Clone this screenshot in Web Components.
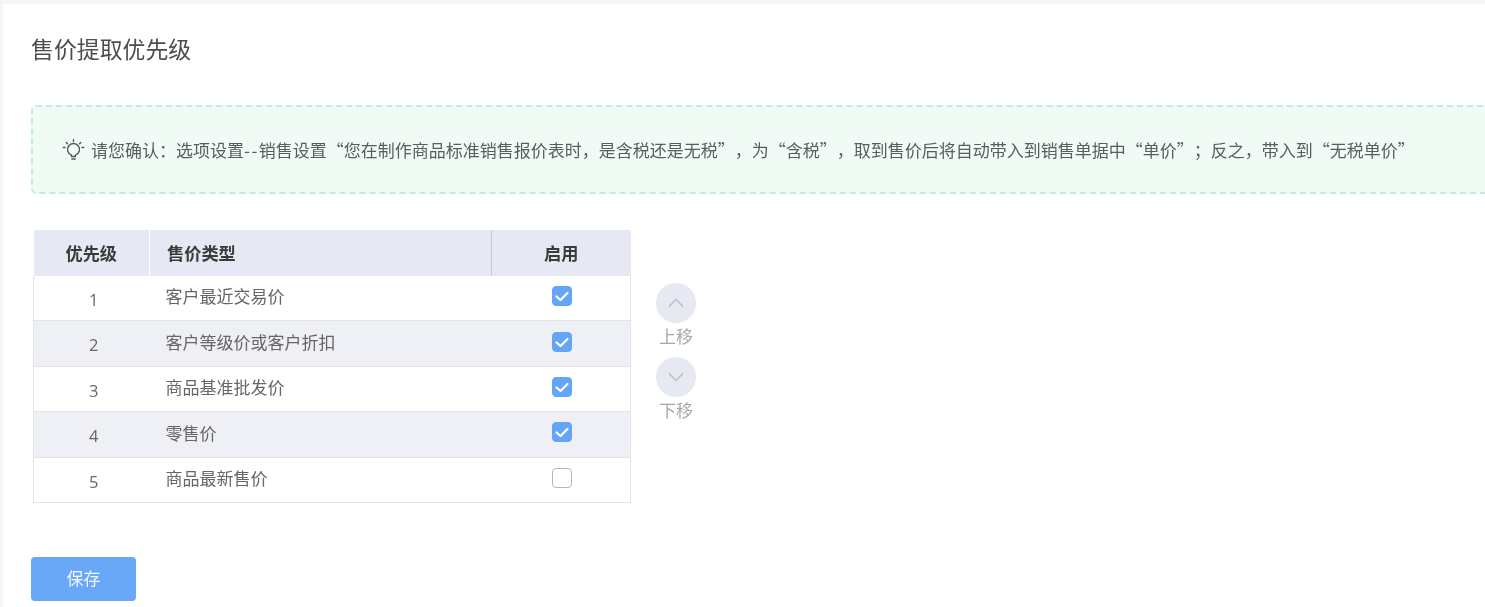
<!DOCTYPE html>
<html lang="zh-CN"><head><meta charset="utf-8">
<style>
html,body{margin:0;padding:0;height:607px;overflow:hidden;background:#f3f5f7;font-family:"Noto Sans CJK SC","Liberation Sans",sans-serif}
tip-notice b{font-weight:400;font-variant-east-asian:normal;letter-spacing:1.500px}
</style></head><body>
<price-page>
  <span slot="title">售价提取优先级</span>
  <tip-notice>请您确认：选项设置<b>--</b>销售设置“您在制作商品标准销售报价表时，是含税还是无税”，为“含税”，取到售价后将自动带入到销售单据中“单价”；反之，带入到“无税单价”</tip-notice>
  <priority-table slot="table"></priority-table>
  <move-controls slot="moves"></move-controls>
  <save-button slot="save">保存</save-button>
</price-page>
<script>
const def=(n,html)=>{customElements.define(n,class extends HTMLElement{constructor(){super();this.attachShadow({mode:'open'}).innerHTML=html;}})};
def('price-page',`<style>
:host{display:block;padding:4px 0 0 3px;height:607px;box-sizing:border-box;overflow:hidden}
.panel{background:#fff;height:100%;width:1600px;padding:0 0 0 28px;box-sizing:border-box;filter:blur(.35px)}
h1{margin:0;padding-top:29px;font-size:22.900px;line-height:30px;font-weight:400;color:#4d4d4d;height:70px;box-sizing:border-box}
.row{display:flex;margin:36px 0 0 2px;height:273px}
.save{margin-top:54px}
</style><div class="panel"><h1><slot name="title"></slot></h1><slot></slot>
<div class="row"><slot name="table"></slot><slot name="moves"></slot></div>
<div class="save"><slot name="save"></slot></div></div>`);
def('tip-notice',`<style>
:host{display:flex;align-items:center;box-sizing:border-box;margin-top:31px;height:89px;width:1560px;border:2px dashed #bfeed9;border-radius:5px;background:#f1fbf6;padding:0 0 0 29px;color:#5c5c5c;font-size:17px;white-space:nowrap;text-spacing-trim:space-all;font-variant-east-asian:full-width}
svg{width:23px;height:22px;margin-right:6px;flex:none}
</style><svg viewBox="0 0 23 22" fill="none" stroke="#555" stroke-width="1.400" stroke-linecap="round" stroke-linejoin="round"><path d="M9.500 17.500v-1.300a6 6 0 1 1 4 0v1.300z"/><path d="M9.800 20h3.400M11.500 .8v1.700M4.300 3.600l1.100 1.100M18.700 3.600l-1.100 1.100M1.300 8.500h1.700M20 8.500h1.700"/></svg><span><slot></slot></span>`);
const rows=[['1','客户最近交易价',1],['2','客户等级价或客户折扣',1],['3','商品基准批发价',1],['4','零售价',1],['5','商品最新售价',0]];
def('priority-table',`<style>
:host{display:block;width:597px}
table{border-collapse:collapse;table-layout:fixed;width:597px;font-size:17px;color:#666}
th{background:#e6e9f3;color:#3a3a3a;font-weight:700;font-size:17.200px;height:45.500px;padding:0 0 1px;box-sizing:border-box}
th+th{border-left:1px solid #fff}
th:last-child{border-left:1px solid #c6c9d2}
th.l,td.l{text-align:left;padding-left:16px}
th.l{padding-left:17px}
td{height:45.400px;padding:0;border:1px solid #e3e4e8;border-width:0 0 1px;text-align:center;box-sizing:border-box}
td:first-child{border-left:1px solid #e3e4e8}
td:last-child{border-right:1px solid #e3e4e8}
tr:nth-child(even) td{background:#eef0f6}
.n{font-family:"Open Sans",sans-serif;font-size:16.500px;padding:2.500px 0 0 4px}
.l span{position:relative;top:-2px}
</style><table><colgroup><col style="width:116px"><col style="width:342px"><col style="width:139px"></colgroup>
<thead><tr><th>优先级</th><th class="l">售价类型</th><th>启用</th></tr></thead><tbody>${rows.map(r=>`<tr><td class="n">${r[0]}</td><td class="l"><span>${r[1]}</span></td><td><check-box ${r[2]?'checked':''}></check-box></td></tr>`).join('')}</tbody></table>`);
def('check-box',`<style>
:host{display:block;width:20px;height:20px;margin:-4px auto 0 auto;position:relative;left:1px;box-sizing:border-box;border-radius:4px;background:#fff;border:1px solid #b5b7bb}
:host([checked]){background:#64a5f6;border-color:#64a5f6}
svg{display:none;width:20px;height:20px;margin:-1px}
:host([checked]) svg{display:block}
</style><svg viewBox="0 0 20 20" fill="none" stroke="#fff" stroke-width="2.200" stroke-linecap="round" stroke-linejoin="round"><path d="M4.500 10.500l4 3.500 7-7"/></svg>`);
def('move-controls',`<style>
:host{display:flex;flex-direction:column;align-items:center;width:40px;margin:53px 0 0 26px;font-size:17px;color:#a6a6a6}
.c{width:40px;height:40px;border-radius:50%;background:#e6e8f2;display:flex;align-items:center;justify-content:center}
.t{line-height:27px;height:35px;white-space:nowrap;margin-top:-1px}
svg{width:20px;height:20px}
</style><div class="c"><svg viewBox="0 0 20 20" fill="none" stroke="#bcbec6" stroke-width="1.300"><path d="M3 13.500L10 6.500l7 7"/></svg></div><div class="t">上移</div>
<div class="c"><svg viewBox="0 0 20 20" fill="none" stroke="#bcbec6" stroke-width="1.300"><path d="M3 6.500l7 7 7-7"/></svg></div><div class="t">下移</div>`);
def('save-button',`<style>
:host{display:flex;align-items:center;justify-content:center;width:105px;height:44px;box-sizing:border-box;border-radius:4px;background:#68a8f7;color:#f3f8ff;font-size:17px;padding-bottom:4px}
</style><slot></slot>`);
</script>
</body></html>
